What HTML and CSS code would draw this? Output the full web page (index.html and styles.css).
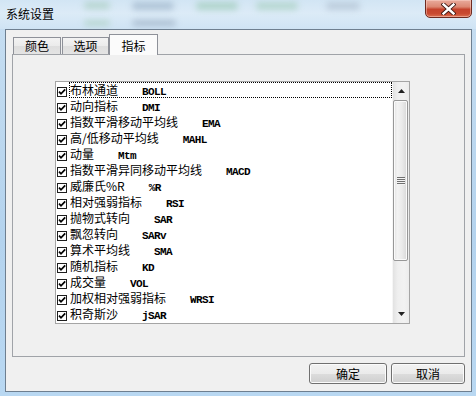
FILE: index.html
```html
<!DOCTYPE html>
<html lang="zh-CN">
<head>
<meta charset="utf-8">
<title>系统设置</title>
<link rel="stylesheet" href="styles.css">
</head>
<body>
<div class="win">
  <div class="titlebar">
    <div class="smudge s1"></div>
    <div class="smudge s2"></div>
    <div class="smudge s3"></div>
    <div class="smudge s4"></div>
    <div class="smudge s5"></div>
    <div class="smudge s6"></div>
    <div class="smudge s7"></div>
    <span class="title">系统设置</span>
    <div class="close">
      <svg width="15" height="12" viewBox="0 0 15 12"><path d="M2.5 1.5 L12.5 10.5 M12.5 1.5 L2.5 10.5" stroke="#3a1510" stroke-width="4.2" stroke-linecap="square" fill="none"/><path d="M2.5 1.5 L12.5 10.5 M12.5 1.5 L2.5 10.5" stroke="#ffffff" stroke-width="2.4" stroke-linecap="square" fill="none"/></svg>
    </div>
  </div>
  <div class="client">
    <div class="tabs">
      <div class="tab t1">颜色</div>
      <div class="tab t2">选项</div>
      <div class="tab t3 active">指标</div>
    </div>
    <div class="panel">
      <div class="listbox">
        <div class="items">
          <div class="row"><svg class="cb" width="10" height="10" viewBox="0 0 10 10"><rect x="0.5" y="0.5" width="9" height="9" fill="#fff" stroke="#1e1e1e"/><path d="M2 4.6 L4 6.8 L8.2 2.4" stroke="#000" stroke-width="1.7" fill="none"/></svg><div class="label focus">布林通道<span class="code">BOLL</span></div></div>
          <div class="row"><svg class="cb" width="10" height="10" viewBox="0 0 10 10"><rect x="0.5" y="0.5" width="9" height="9" fill="#fff" stroke="#1e1e1e"/><path d="M2 4.6 L4 6.8 L8.2 2.4" stroke="#000" stroke-width="1.7" fill="none"/></svg><div class="label">动向指标<span class="code">DMI</span></div></div>
          <div class="row"><svg class="cb" width="10" height="10" viewBox="0 0 10 10"><rect x="0.5" y="0.5" width="9" height="9" fill="#fff" stroke="#1e1e1e"/><path d="M2 4.6 L4 6.8 L8.2 2.4" stroke="#000" stroke-width="1.7" fill="none"/></svg><div class="label">指数平滑移动平均线<span class="code">EMA</span></div></div>
          <div class="row"><svg class="cb" width="10" height="10" viewBox="0 0 10 10"><rect x="0.5" y="0.5" width="9" height="9" fill="#fff" stroke="#1e1e1e"/><path d="M2 4.6 L4 6.8 L8.2 2.4" stroke="#000" stroke-width="1.7" fill="none"/></svg><div class="label">高/低移动平均线<span class="code">MAHL</span></div></div>
          <div class="row"><svg class="cb" width="10" height="10" viewBox="0 0 10 10"><rect x="0.5" y="0.5" width="9" height="9" fill="#fff" stroke="#1e1e1e"/><path d="M2 4.6 L4 6.8 L8.2 2.4" stroke="#000" stroke-width="1.7" fill="none"/></svg><div class="label">动量<span class="code">Mtm</span></div></div>
          <div class="row"><svg class="cb" width="10" height="10" viewBox="0 0 10 10"><rect x="0.5" y="0.5" width="9" height="9" fill="#fff" stroke="#1e1e1e"/><path d="M2 4.6 L4 6.8 L8.2 2.4" stroke="#000" stroke-width="1.7" fill="none"/></svg><div class="label">指数平滑异同移动平均线<span class="code">MACD</span></div></div>
          <div class="row"><svg class="cb" width="10" height="10" viewBox="0 0 10 10"><rect x="0.5" y="0.5" width="9" height="9" fill="#fff" stroke="#1e1e1e"/><path d="M2 4.6 L4 6.8 L8.2 2.4" stroke="#000" stroke-width="1.7" fill="none"/></svg><div class="label">威廉氏%R<span class="code">%R</span></div></div>
          <div class="row"><svg class="cb" width="10" height="10" viewBox="0 0 10 10"><rect x="0.5" y="0.5" width="9" height="9" fill="#fff" stroke="#1e1e1e"/><path d="M2 4.6 L4 6.8 L8.2 2.4" stroke="#000" stroke-width="1.7" fill="none"/></svg><div class="label">相对强弱指标<span class="code">RSI</span></div></div>
          <div class="row"><svg class="cb" width="10" height="10" viewBox="0 0 10 10"><rect x="0.5" y="0.5" width="9" height="9" fill="#fff" stroke="#1e1e1e"/><path d="M2 4.6 L4 6.8 L8.2 2.4" stroke="#000" stroke-width="1.7" fill="none"/></svg><div class="label">抛物式转向<span class="code">SAR</span></div></div>
          <div class="row"><svg class="cb" width="10" height="10" viewBox="0 0 10 10"><rect x="0.5" y="0.5" width="9" height="9" fill="#fff" stroke="#1e1e1e"/><path d="M2 4.6 L4 6.8 L8.2 2.4" stroke="#000" stroke-width="1.7" fill="none"/></svg><div class="label">飘忽转向<span class="code">SARv</span></div></div>
          <div class="row"><svg class="cb" width="10" height="10" viewBox="0 0 10 10"><rect x="0.5" y="0.5" width="9" height="9" fill="#fff" stroke="#1e1e1e"/><path d="M2 4.6 L4 6.8 L8.2 2.4" stroke="#000" stroke-width="1.7" fill="none"/></svg><div class="label">算术平均线<span class="code">SMA</span></div></div>
          <div class="row"><svg class="cb" width="10" height="10" viewBox="0 0 10 10"><rect x="0.5" y="0.5" width="9" height="9" fill="#fff" stroke="#1e1e1e"/><path d="M2 4.6 L4 6.8 L8.2 2.4" stroke="#000" stroke-width="1.7" fill="none"/></svg><div class="label">随机指标<span class="code">KD</span></div></div>
          <div class="row"><svg class="cb" width="10" height="10" viewBox="0 0 10 10"><rect x="0.5" y="0.5" width="9" height="9" fill="#fff" stroke="#1e1e1e"/><path d="M2 4.6 L4 6.8 L8.2 2.4" stroke="#000" stroke-width="1.7" fill="none"/></svg><div class="label">成交量<span class="code">VOL</span></div></div>
          <div class="row"><svg class="cb" width="10" height="10" viewBox="0 0 10 10"><rect x="0.5" y="0.5" width="9" height="9" fill="#fff" stroke="#1e1e1e"/><path d="M2 4.6 L4 6.8 L8.2 2.4" stroke="#000" stroke-width="1.7" fill="none"/></svg><div class="label">加权相对强弱指标<span class="code">WRSI</span></div></div>
          <div class="row"><svg class="cb" width="10" height="10" viewBox="0 0 10 10"><rect x="0.5" y="0.5" width="9" height="9" fill="#fff" stroke="#1e1e1e"/><path d="M2 4.6 L4 6.8 L8.2 2.4" stroke="#000" stroke-width="1.7" fill="none"/></svg><div class="label">积奇斯沙<span class="code">jSAR</span></div></div>
        </div>
        <div class="scrollbar">
          <div class="sbtn">
            <svg width="7" height="4" viewBox="0 0 7 4"><path d="M0 4 L3.5 0 L7 4 Z" fill="#222"/></svg>
          </div>
          <div class="track">
            <div class="thumb"><div class="grip"></div></div>
          </div>
          <div class="sbtn">
            <svg width="7" height="4" viewBox="0 0 7 4"><path d="M0 0 L7 0 L3.5 4 Z" fill="#222"/></svg>
          </div>
        </div>
      </div>
    </div>
    <div class="buttons">
      <button class="btn ok">确定</button>
      <button class="btn cancel">取消</button>
    </div>
  </div>
</div>
</body>
</html>
```

FILE: styles.css
```css
* { box-sizing: border-box; }

html, body {
  margin: 0;
  padding: 0;
}

body {
  width: 476px;
  height: 396px;
  overflow: hidden;
  font-family: "Noto Sans CJK SC", "Noto Sans", sans-serif;
  font-size: 12px;
  color: #000;
  background: linear-gradient(to bottom, #c7def1 0%, #b4d3ee 60%, #b9d8f2 100%);
}

.win {
  width: 476px;
  height: 396px;
}

.titlebar {
  position: relative;
  height: 29px;
  display: flex;
  justify-content: space-between;
  align-items: flex-start;
  padding-left: 6px;
  padding-right: 4px;
  background: linear-gradient(to bottom, #d2e5f4 0%, #dcebf7 45%, #cfe3f4 100%);
  overflow: hidden;
}

.smudge {
  position: absolute;
  border-radius: 4px;
  filter: blur(3px);
  opacity: 0.55;
}
.s1 { left: 84px; top: 2px; width: 26px; height: 7px; background: #9cc6b0; }
.s2 { left: 132px; top: 2px; width: 42px; height: 8px; background: #8ea6bd; }
.s3 { left: 196px; top: 2px; width: 42px; height: 8px; background: #8fc4a8; }
.s4 { left: 256px; top: 2px; width: 42px; height: 8px; background: #9ccab3; }
.s5 { left: 326px; top: 2px; width: 34px; height: 8px; background: #a7b7c8; }
.s6 { left: 84px; top: 20px; width: 26px; height: 6px; background: #a1cbb3; }
.s7 { left: 132px; top: 20px; width: 44px; height: 6px; background: #8a9db3; }

.title {
  position: relative;
  padding-top: 5px;
  line-height: 17px;
  font-size: 12px;
  color: #000;
}

.close {
  position: relative;
  width: 47px;
  height: 19px;
  margin-top: -1px;
  border: 1px solid #6e2a20;
  border-radius: 0 0 5px 5px;
  background: linear-gradient(to bottom, #e9ab9c 0%, #dc8873 40%, #c5432c 55%, #c94a31 80%, #dc7050 100%);
  box-shadow: inset 0 0 0 1px rgba(255, 220, 210, 0.45);
  display: flex;
  align-items: center;
  justify-content: center;
}

.client {
  margin-left: 5px;
  width: 467px;
  height: 363px;
  border: 1px solid #6e7f90;
  background: #f0f0f0;
  padding: 4px 6px 0 6px;
}

.tabs {
  display: flex;
  align-items: flex-end;
  height: 21px;
  padding-left: 1px;
}

.tab {
  height: 17px;
  margin-bottom: 1px;
  border: 1px solid #8e9199;
  border-bottom: none;
  background: linear-gradient(to bottom, #f3f3f3 0%, #ebebeb 50%, #dedede 51%, #e4e4e4 100%);
  text-align: center;
  line-height: 15px;
  font-size: 12px;
}
.t1 { width: 48px; margin-right: 1px; }
.t2 { width: 47px; }
.t3 { width: 49px; }

.tab.active {
  position: relative;
  z-index: 1;
  height: 21px;
  margin-bottom: 0;
  background: #fbfbfb;
  line-height: 21px;
  border-color: #8e9199;
}

.panel {
  margin-top: -1px;
  width: 453px;
  height: 303px;
  border: 1px solid #a0a3a8;
  background: #f0f0f0;
  padding: 26px 0 0 42px;
}

.listbox {
  width: 355px;
  height: 243px;
  border: 1px solid #a5a5a5;
  background: #fff;
  display: flex;
}

.items {
  flex: 1;
  display: flex;
  flex-direction: column;
}

.row {
  height: 16px;
  display: flex;
  align-items: flex-end;
  flex: none;
}

.cb {
  display: block;
  flex: none;
  margin-left: 1px;
  margin-bottom: 1px;
}

.label {
  flex: 1;
  height: 16px;
  margin-left: 2px;
  border: 1px solid transparent;
  white-space: nowrap;
  overflow: hidden;
  font-size: 12px;
  line-height: 14px;
}

.label.focus {
  border: 1px dotted #000;
}

.code {
  margin-left: 24px;
  font-family: "Liberation Mono", monospace;
  font-weight: bold;
  font-size: 11px;
  letter-spacing: -0.6px;
  vertical-align: baseline;
}

.scrollbar {
  width: 17px;
  display: flex;
  flex-direction: column;
  background: linear-gradient(to right, #e2e2e2 0%, #efefef 30%, #f2f2f2 70%, #ececec 100%);
  border-left: 1px solid #f6f6f6;
}

.sbtn {
  height: 18px;
  flex: none;
  display: flex;
  align-items: center;
  justify-content: center;
}

.track {
  flex: 1;
  display: flex;
  flex-direction: column;
}

.thumb {
  height: 161px;
  width: 15px;
  border: 1px solid #979797;
  border-radius: 2px;
  background: linear-gradient(to right, #e0e0e0 0%, #f3f3f3 25%, #ebebeb 60%, #d8d8d8 100%);
  box-shadow: inset 0 0 0 1px #fafafa;
  display: flex;
  align-items: center;
  justify-content: center;
}

.grip {
  width: 8px;
  height: 8px;
  background: repeating-linear-gradient(to bottom, #6f6f6f 0px, #6f6f6f 1px, #f4f4f4 1px, #f4f4f4 2px);
}

.buttons {
  display: flex;
  justify-content: flex-end;
  gap: 4px;
  margin-top: 6px;
}

.btn {
  height: 21px;
  border: 1px solid #707070;
  border-radius: 3px;
  background: linear-gradient(to bottom, #f2f2f2 0%, #ebebeb 50%, #dddddd 51%, #cfcfcf 100%);
  box-shadow: inset 0 0 0 1px #fbfbfb;
  font-family: "Noto Sans CJK SC", "Noto Sans", sans-serif;
  font-size: 12px;
  color: #000;
  padding: 0;
  line-height: 17px;
}
.ok { width: 78px; }
.cancel { width: 74px; }
```
